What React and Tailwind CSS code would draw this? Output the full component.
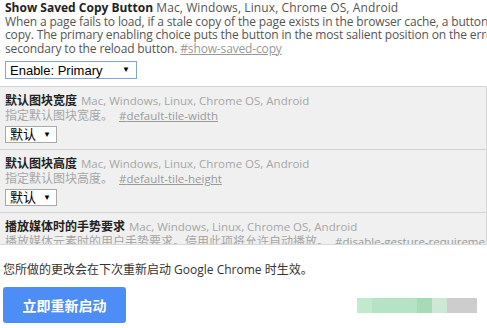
import React from 'react';

const cjk = '"Open Sans", "Noto Sans CJK SC", sans-serif';

const Select = ({ label, width }) => (
  <div
    className={`flex h-[17px] items-center justify-between border border-[#a9a9a9] bg-white pl-[4px] pr-[5px] text-[13px] text-black ${width}`}
    style={{ fontFamily: '"Liberation Sans", "Noto Sans CJK SC", sans-serif' }}
  >
    <span className="leading-none">{label}</span>
    <span className="text-[8px] leading-none">▼</span>
  </div>
);

const FlagRow = ({ title, desc, tag, select }) => (
  <div className="border-t border-[#d3d3d3] px-[5px] pt-[6px] pb-[6px]">
    <div className="flex h-[15px] items-center whitespace-nowrap">
      <span className="text-[12px] font-bold text-[#222]">{title}</span>
      <span className="ml-[4px] text-[11.5px] text-[#a6a6a6]">Mac, Windows, Linux, Chrome OS, Android</span>
    </div>
    <div className="flex h-[15px] items-center whitespace-nowrap text-[#a6a6a6]">
      <span className="text-[12px]">{desc}</span>
      <span className="ml-[6px] text-[11.5px] underline text-[#9a9a9a]">#{tag}</span>
    </div>
    {select && <div className="mt-[3px]">{select}</div>}
  </div>
);

export default function App() {
  return (
    <div className="h-[328px] w-[487px] overflow-hidden bg-white" style={{ fontFamily: cjk }}>
      {/* saved copy flag */}
      <div className="h-[86px] px-[5px] pt-[1px] text-[12px] leading-[13.5px] whitespace-nowrap">
        <div>
          <span className="font-bold text-[#222]">Show Saved Copy Button</span>{' '}
          <span className="tracking-[0.1px] text-[#555]">Mac, Windows, Linux, Chrome OS, Android</span>
        </div>
        <div className="tracking-[-0.15px] text-[#555]">
          When a page fails to load, if a stale copy of the page exists in the browser cache, a button will be presented to allow the user to load that stale
        </div>
        <div className="tracking-[-0.15px] text-[#555]">
          copy. The primary enabling choice puts the button in the most salient position on the error page; the secondary enabling choice puts it
        </div>
        <div className="tracking-[-0.15px] text-[#555]">
          secondary to the reload button. <span className="underline text-[#999]">#show-saved-copy</span>
        </div>
        <div className="mt-[6px] flex h-[18px] w-[132px] items-center justify-between border border-[#7ea6d6] bg-white pl-[4px] pr-[6px] text-[13px] text-black" style={{ fontFamily: '"Liberation Sans", sans-serif' }}>
          <span className="leading-none">Enable: Primary</span>
          <span className="text-[8px] leading-none">▼</span>
        </div>
      </div>

      {/* disabled-looking flags */}
      <div className="h-[159px] overflow-hidden border-r border-b border-[#d8d8d8] bg-[#f0f0f0]">
        <FlagRow
          title="默认图块宽度"
          desc="指定默认图块宽度。"
          tag="default-tile-width"
          select={<Select label="默认" width="w-[52px]" />}
        />
        <FlagRow
          title="默认图块高度"
          desc="指定默认图块高度。"
          tag="default-tile-height"
          select={<Select label="默认" width="w-[52px]" />}
        />
        <FlagRow
          title="播放媒体时的手势要求"
          desc="播放媒体元素时的用户手势要求。停用此项将允许自动播放。"
          tag="disable-gesture-requirement-for-media-playback"
        />
      </div>

      {/* restart */}
      <div className="px-[3px] pt-[17px]">
        <div className="text-[12px] leading-[15px] text-[#333]">
          您所做的更改会在下次重新启动 Google Chrome 时生效。
        </div>
        <div className="mt-[10px] flex items-center justify-between">
          <button className="h-[36px] w-[123px] rounded-[3px] bg-[#4c8df6] text-[14px] font-bold text-white">
            立即重新启动
          </button>
          <div className="mr-[7px] flex h-[15px]">
            <div className="w-[15px] bg-[#c2e8cd]" />
            <div className="w-[45px] bg-[#b6e3c4]" />
            <div className="w-[15px] bg-[#a7dbb7]" />
            <div className="w-[15px] bg-[#cde9d6]" />
            <div className="w-[30px] bg-[#cdcdcd]" />
          </div>
        </div>
      </div>
    </div>
  );
}
